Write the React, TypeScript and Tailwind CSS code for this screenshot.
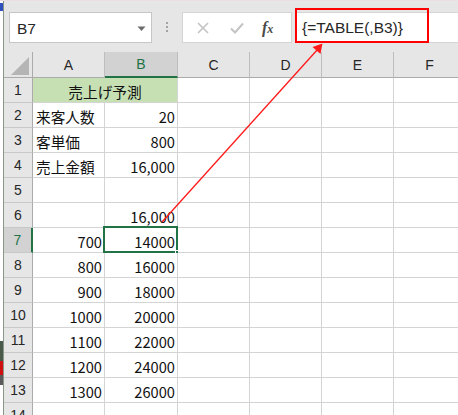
import React from "react";

const cellFont = { fontFamily: '"Noto Sans CJK JP", "Liberation Sans", sans-serif' };
const uiFont = { fontFamily: '"Liberation Sans", Arial, sans-serif' };

type Row = { n: number; a: string; b: string; aAlign?: "l" | "r" };

const rows: Row[] = [
  { n: 2, a: "来客人数", b: "20", aAlign: "l" },
  { n: 3, a: "客単価", b: "800", aAlign: "l" },
  { n: 4, a: "売上金額", b: "16,000", aAlign: "l" },
  { n: 5, a: "", b: "" },
  { n: 6, a: "", b: "16,000" },
  { n: 7, a: "700", b: "14000", aAlign: "r" },
  { n: 8, a: "800", b: "16000", aAlign: "r" },
  { n: 9, a: "900", b: "18000", aAlign: "r" },
  { n: 10, a: "1000", b: "20000", aAlign: "r" },
  { n: 11, a: "1100", b: "22000", aAlign: "r" },
  { n: 12, a: "1200", b: "24000", aAlign: "r" },
  { n: 13, a: "1300", b: "26000", aAlign: "r" },
  { n: 14, a: "", b: "" },
];

function RowHeader({ n, selected }: { n: number; selected?: boolean }) {
  return (
    <div
      className={
        "w-[29px] h-[25px] shrink-0 flex items-center justify-center border-b border-[#c8c8c8] text-[14px] " +
        (selected
          ? "bg-[#d2d2d2] text-[#217346] border-r-2 border-r-[#217346]"
          : "bg-[#e6e6e6] text-[#262626] border-r border-r-[#ababab]")
      }
      style={uiFont}
    >
      {n}
    </div>
  );
}

function Cell({
  w,
  text,
  align,
  children,
}: {
  w: string;
  text?: string;
  align?: "l" | "r";
  children?: React.ReactNode;
}) {
  return (
    <div
      className={
        w +
        " h-[25px] shrink-0 bg-white border-r border-b border-[#d4d4d4] flex items-center pt-[3px] text-[14.67px] leading-[18px] text-[#111] relative " +
        (align === "r" ? "justify-end pr-[2px]" : "justify-start pl-[3px]")
      }
      style={cellFont}
    >
      {text}
      {children}
    </div>
  );
}

function EmptyCells() {
  return (
    <>
      <Cell w="w-[72px]" />
      <Cell w="w-[72px]" />
      <Cell w="w-[72px]" />
      <Cell w="w-[72px]" />
    </>
  );
}

export default function App() {
  return (
    <div className="relative w-[458px] h-[415px] overflow-hidden bg-[#e6e6e6] flex border-t border-[#ecdfe2]">
      {/* left strip of another window */}
      <div className="w-[3px] shrink-0 bg-white flex flex-col">
        <div className="h-[8px] w-[3px] bg-[#3050c0] mt-[2px]" />
        <div className="h-[330px]" />
        <div className="h-[20px] w-[3px] bg-[#4a5a4a]" />
        <div className="h-[14px] w-[3px] bg-[#d01010]" />
        <div className="h-[10px] w-[3px] bg-[#5a5a5a]" />
      </div>
      <div className="w-[1px] shrink-0 bg-[#8a978a]" />

      <div className="flex-1 flex flex-col min-w-0">
        {/* toolbar */}
        <div className="h-[51px] shrink-0 flex items-start pt-[11px] pl-[5px]">
          <div
            className="w-[143px] h-[31px] shrink-0 bg-white border border-[#c6c6c6] flex items-center justify-between pl-[7px] pr-[5px] pt-[2px]"
            style={uiFont}
          >
            <span className="text-[15.5px] text-[#262626]">B7</span>
            <svg width="9" height="6" viewBox="0 0 9 6">
              <path d="M0.5 0.5 L8.5 0.5 L4.5 5 Z" fill="#6b6b6b" />
            </svg>
          </div>
          <div className="ml-[14px] mt-[10px] w-[3px] flex flex-col gap-[2px]">
            <div className="w-[2px] h-[2px] bg-[#a3a3a3]" />
            <div className="w-[2px] h-[2px] bg-[#a3a3a3]" />
            <div className="w-[2px] h-[2px] bg-[#a3a3a3]" />
          </div>
          <div className="ml-[13px] w-[110px] h-[31px] shrink-0 bg-white border border-[#d5d5d5] flex items-center">
            <svg width="14" height="14" viewBox="0 0 14 14" className="ml-[13px]">
              <path d="M2 2 L12 12 M12 2 L2 12" stroke="#c3c3c3" strokeWidth="1.6" />
            </svg>
            <svg width="16" height="14" viewBox="0 0 16 14" className="ml-[19px]">
              <path d="M2 7.5 L6 11.5 L14 2.5" stroke="#c3c3c3" strokeWidth="2" fill="none" />
            </svg>
            <span
              className="ml-[17px] italic font-bold text-[#4a4a4a] leading-none"
              style={{ fontFamily: '"Liberation Serif", "Times New Roman", serif' }}
            >
              <span className="text-[16px]">f</span>
              <span className="text-[12px]">x</span>
            </span>
          </div>
          <div className="relative ml-[3px] flex-1 h-[31px] bg-white border border-r-0 border-[#d5d5d5] flex items-center pl-[6px] pt-[1px]">
            <span className="text-[15.5px] text-[#262626] whitespace-nowrap" style={uiFont}>
              {"{=TABLE(,B3)}"}
            </span>
            <div className="absolute left-[-1px] top-[-5px] w-[134px] h-[35px] border-2 border-[#ff0000]" />
          </div>
        </div>

        {/* column headers */}
        <div className="flex h-[26px] shrink-0" style={uiFont}>
          <div className="w-[29px] shrink-0 bg-[#e6e6e6] border-r border-b border-[#ababab] relative flex items-end justify-end pr-[3px] pb-[2px]">
            <svg width="18" height="18" viewBox="0 0 18 18">
              <path d="M18 0 L18 18 L0 18 Z" fill="#b5b5b5" />
            </svg>
          </div>
          <div className="w-[72px] shrink-0 bg-[#e6e6e6] border-r border-b border-[#bdbdbd] border-b-[#ababab] flex items-center justify-center text-[14px] text-[#262626] pt-[1px]">
            A
          </div>
          <div className="w-[73px] shrink-0 bg-[#d2d2d2] border-r border-[#bdbdbd] border-b-2 border-b-[#217346] flex items-center justify-center text-[14px] text-[#217346] pt-[1px]">
            B
          </div>
          {["C", "D", "E", "F"].map((c) => (
            <div
              key={c}
              className="w-[72px] shrink-0 bg-[#e6e6e6] border-r border-b border-[#bdbdbd] border-b-[#ababab] flex items-center justify-center text-[14px] text-[#262626] pt-[1px]"
            >
              {c}
            </div>
          ))}
        </div>

        {/* row 1 */}
        <div className="flex shrink-0">
          <RowHeader n={1} />
          <div
            className="w-[145px] h-[25px] shrink-0 bg-[#c6e0b4] border-r border-b border-[#d4d4d4] flex items-center justify-center pt-[3px] text-[14.67px] leading-[18px] text-[#111]"
            style={cellFont}
          >
            売上げ予測
          </div>
          <EmptyCells />
        </div>

        {rows.map((r) => (
          <div key={r.n} className="flex shrink-0">
            <RowHeader n={r.n} selected={r.n === 7} />
            <Cell w="w-[72px]" text={r.a} align={r.aAlign} />
            <Cell w="w-[73px]" text={r.b} align="r">
              {r.n === 7 && (
                <>
                  <div className="absolute left-[-2px] top-[-2px] right-[-1px] bottom-[-1px] border-2 border-[#217346]" />
                  <div className="absolute right-[-4px] bottom-[-4px] w-[6px] h-[6px] bg-[#217346] border border-white" />
                </>
              )}
            </Cell>
            <EmptyCells />
          </div>
        ))}
      </div>

      {/* red arrow annotation */}
      <svg
        className="absolute left-0 top-0 pointer-events-none"
        width="458"
        height="415"
        viewBox="0 0 458 415"
      >
        <line x1="162" y1="221" x2="318" y2="48" stroke="#ff1a1a" strokeWidth="1.3" />
        <path d="M322.5 42.5 L320.5 53 L312.5 46 Z" fill="#ff1a1a" />
      </svg>
    </div>
  );
}
